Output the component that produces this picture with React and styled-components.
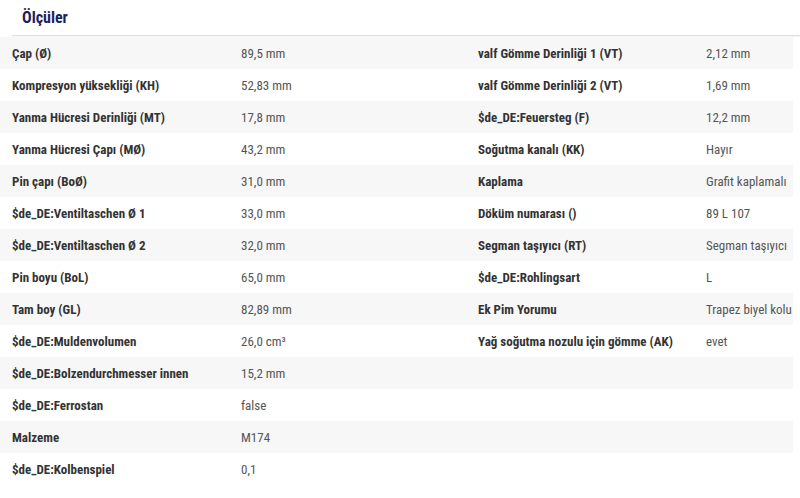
import React from "react";
import styled, { createGlobalStyle } from "styled-components";

const GlobalStyle = createGlobalStyle`
  body {
    margin: 0;
    background: #fff;
    font-family: "Roboto Condensed", "Liberation Sans Narrow", Roboto, sans-serif;
  }
`;

const rows = [
  ["Çap (Ø)", "89,5 mm", "valf Gömme Derinliği 1 (VT)", "2,12 mm"],
  ["Kompresyon yüksekliği (KH)", "52,83 mm", "valf Gömme Derinliği 2 (VT)", "1,69 mm"],
  ["Yanma Hücresi Derinliği (MT)", "17,8 mm", "$de_DE:Feuersteg (F)", "12,2 mm"],
  ["Yanma Hücresi Çapı (MØ)", "43,2 mm", "Soğutma kanalı (KK)", "Hayır"],
  ["Pin çapı (BoØ)", "31,0 mm", "Kaplama", "Grafit kaplamalı"],
  ["$de_DE:Ventiltaschen Ø 1", "33,0 mm", "Döküm numarası ()", "89 L 107"],
  ["$de_DE:Ventiltaschen Ø 2", "32,0 mm", "Segman taşıyıcı (RT)", "Segman taşıyıcı"],
  ["Pin boyu (BoL)", "65,0 mm", "$de_DE:Rohlingsart", "L"],
  ["Tam boy (GL)", "82,89 mm", "Ek Pim Yorumu", "Trapez biyel kolu"],
  ["$de_DE:Muldenvolumen", "26,0 cm³", "Yağ soğutma nozulu için gömme (AK)", "evet"],
  ["$de_DE:Bolzendurchmesser innen", "15,2 mm", "", ""],
  ["$de_DE:Ferrostan", "false", "", ""],
  ["Malzeme", "M174", "", ""],
  ["$de_DE:Kolbenspiel", "0,1", "", ""],
];

const Specs = () => {
  return (
    <Wrapper>
      <GlobalStyle />
      <Title>Ölçüler</Title>
      <Table>
        {rows.map(([l1, v1, l2, v2]) => (
          <Row key={l1}>
            <Label>{l1}</Label>
            <Value>{v1}</Value>
            <Label>{l2}</Label>
            <Value>{v2}</Value>
          </Row>
        ))}
      </Table>
    </Wrapper>
  );
};

const Wrapper = styled.section`
  width: 800px;
`;

const Title = styled.h3`
  margin: 0 0 0 12px;
  height: 36px;
  padding: 0 10px;
  display: flex;
  align-items: center;
  font-size: 16px;
  font-weight: 700;
  color: #1c1f5a;
  border-bottom: 1px solid #dedede;
  box-sizing: border-box;
  box-shadow: 0 1px 1px rgba(0, 0, 0, 0.03);
`;

const Table = styled.div`
  width: 793px;
  margin-top: 1px;
`;

const Row = styled.div`
  display: grid;
  grid-template-columns: 229px 237px 228px 1fr;
  height: 32px;
  align-items: center;
  &:nth-child(odd) {
    background: #f7f7f7;
  }
`;

const Label = styled.div`
  padding-left: 12px;
  padding-top: 1px;
  font-size: 13px;
  font-weight: 700;
  color: #333;
  white-space: nowrap;
`;

const Value = styled.div`
  padding-left: 12px;
  padding-top: 1px;
  font-size: 13px;
  color: #555;
  white-space: nowrap;
`;

export default Specs;
